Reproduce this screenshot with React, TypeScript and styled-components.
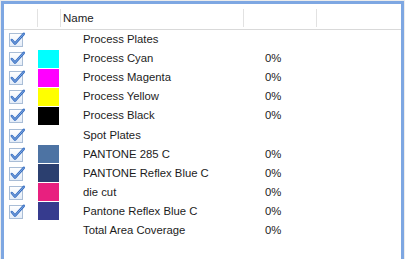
import React from "react";
import styled, { createGlobalStyle } from "styled-components";

const Global = createGlobalStyle`
  html, body { margin: 0; padding: 0; background: #ffffff; }
  body { font-family: "Liberation Sans", Arial, sans-serif; }
`;

const Page = styled.div`
  width: 405px;
  height: 259px;
  box-sizing: border-box;
  padding: 1px 1px 0 1px;
  background: #ececec;
  overflow: hidden;
`;

const Frame = styled.div`
  height: 100%;
  box-sizing: border-box;
  border: 3px solid #7ea7e2;
  border-bottom: none;
  background: #ffffff;
`;

const COLS = "33px 23px 183px 73px 1fr";

const Header = styled.div`
  display: grid;
  grid-template-columns: ${COLS};
  height: 26px;
  border-bottom: 1px solid #d9d9d9;
  box-sizing: border-box;
`;

const HeadCell = styled.div<{ $sep?: boolean }>`
  position: relative;
  display: flex;
  align-items: center;
  padding: 2px 0 0 3px;
  font-size: 11.5px;
  color: #222;
  &::before {
    content: "";
    display: ${(p) => (p.$sep ? "block" : "none")};
    position: absolute;
    left: 0;
    top: 5px;
    bottom: 2px;
    width: 1px;
    background: #e2e2e2;
  }
`;

const Rows = styled.div`
  display: flex;
  flex-direction: column;
`;

const Row = styled.div`
  display: grid;
  grid-template-columns: ${COLS};
  height: 19.1px;
  align-items: center;
`;

const CheckCell = styled.div`
  display: flex;
  align-items: center;
  padding-left: 5px;
`;

const SwatchCell = styled.div`
  display: flex;
  align-items: center;
  padding-left: 1px;
`;

const Swatch = styled.div<{ $color: string }>`
  width: 21px;
  height: 18px;
  background: ${(p) => p.$color};
`;

const NameCell = styled.div`
  padding-left: 23px;
  font-size: 11.3px;
  color: #1c1c1c;
  white-space: nowrap;
  margin-top: -1px;
`;

const PctCell = styled.div`
  padding-left: 22px;
  font-size: 11.3px;
  color: #1c1c1c;
  margin-top: -1px;
`;

const Check = () => (
  <svg width="17" height="15" viewBox="0 0 17 15">
    <defs>
      <linearGradient id="cb" x1="0" y1="0" x2="0" y2="1">
        <stop offset="0" stopColor="#ffffff" />
        <stop offset="1" stopColor="#e3ecf8" />
      </linearGradient>
    </defs>
    <rect x="0.5" y="1.5" width="13" height="13" fill="url(#cb)" stroke="#a9bdd6" />
    <path
      d="M2.8 8 L6 11.6 L14.8 1.8"
      fill="none"
      stroke="#336bc0"
      strokeWidth="2.5"
      strokeLinecap="round"
      strokeLinejoin="round"
    />
    <path
      d="M2.8 8 L6 11.6 L14.8 1.8"
      fill="none"
      stroke="#a9c8f0"
      strokeWidth="0.7"
      strokeLinecap="round"
      strokeLinejoin="round"
    />
  </svg>
);

type Item = { name: string; color?: string; pct?: string; check: boolean };

const items: Item[] = [
  { name: "Process Plates", check: true },
  { name: "Process Cyan", color: "#00ffff", pct: "0%", check: true },
  { name: "Process Magenta", color: "#ff00ff", pct: "0%", check: true },
  { name: "Process Yellow", color: "#ffff00", pct: "0%", check: true },
  { name: "Process Black", color: "#000000", pct: "0%", check: true },
  { name: "Spot Plates", check: true },
  { name: "PANTONE 285 C", color: "#4d73a3", pct: "0%", check: true },
  { name: "PANTONE Reflex Blue C", color: "#2b3f6f", pct: "0%", check: true },
  { name: "die cut", color: "#e8207f", pct: "0%", check: true },
  { name: "Pantone Reflex Blue C", color: "#363b8e", pct: "0%", check: true },
  { name: "Total Area Coverage", pct: "0%", check: false },
];

export default function App() {
  return (
    <>
      <Global />
      <Page>
        <Frame>
          <Header>
            <HeadCell />
            <HeadCell $sep />
            <HeadCell $sep>Name</HeadCell>
            <HeadCell $sep />
            <HeadCell $sep />
          </Header>
          <Rows>
            {items.map((it) => (
              <Row key={it.name}>
                <CheckCell>{it.check && <Check />}</CheckCell>
                <SwatchCell>{it.color && <Swatch $color={it.color} />}</SwatchCell>
                <NameCell>{it.name}</NameCell>
                <PctCell>{it.pct}</PctCell>
                <div />
              </Row>
            ))}
          </Rows>
        </Frame>
      </Page>
    </>
  );
}
